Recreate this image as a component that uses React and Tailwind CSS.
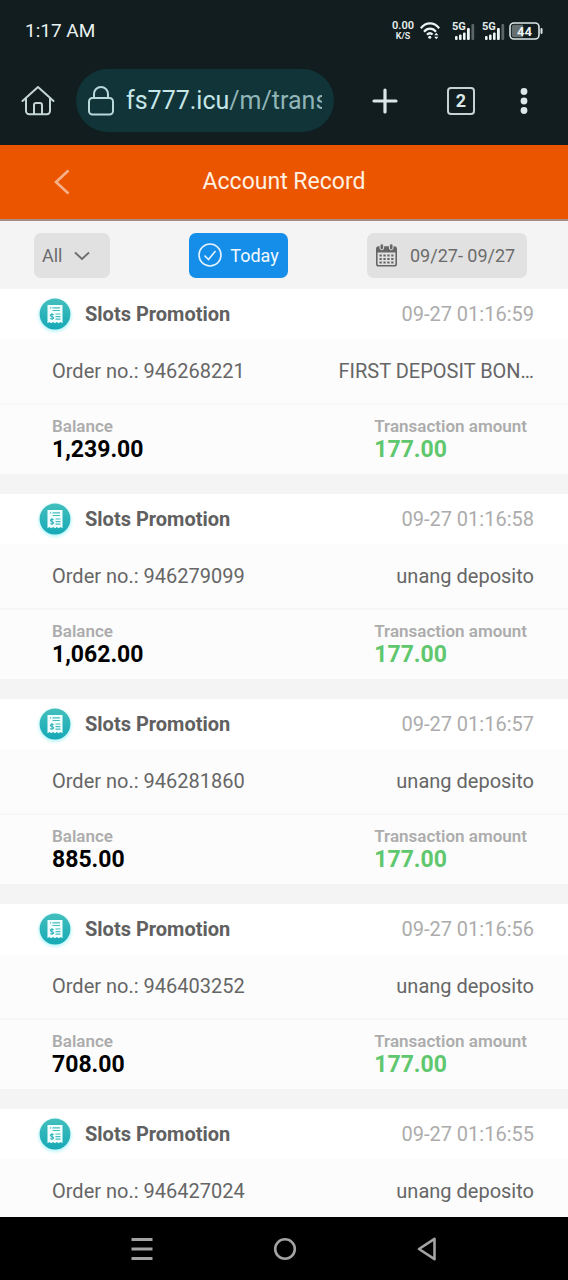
import React from "react";

const records = [
  { time: "09-27 01:16:59", order: "946268221", note: "FIRST DEPOSIT BON…", balance: "1,239.00", amount: "177.00" },
  { time: "09-27 01:16:58", order: "946279099", note: "unang deposito", balance: "1,062.00", amount: "177.00" },
  { time: "09-27 01:16:57", order: "946281860", note: "unang deposito", balance: "885.00", amount: "177.00" },
  { time: "09-27 01:16:56", order: "946403252", note: "unang deposito", balance: "708.00", amount: "177.00" },
  { time: "09-27 01:16:55", order: "946427024", note: "unang deposito" },
];

function Signal() {
  return (
    <svg width="24" height="20" viewBox="0 0 24 20" className="shrink-0" role="img" aria-label="5G signal">
      <text x="0" y="9" fontSize="11" fontWeight="700" fill="#e4ecec" fontFamily="Roboto, sans-serif">5G</text>
      <g fill="#eef5f5">
        <rect x="3" y="15" width="2.6" height="4" rx="1" />
        <rect x="7" y="13.5" width="2.6" height="5.5" rx="1" />
        <rect x="11" y="11.5" width="2.6" height="7.5" rx="1" />
        <rect x="15" y="7" width="2.8" height="12" rx="1" />
        <rect x="19.4" y="3" width="2.8" height="16" rx="1" fill="#5b6565" />
      </g>
    </svg>
  );
}

function StatusBar() {
  return (
    <div className="flex h-[62px] shrink-0 items-center justify-between pl-[25px] pr-[25px] text-[#e9f1f1]">
      <span className="text-[19px]">1:17 AM</span>
      <div className="flex items-center">
        <div className="mr-[6px] text-center text-[11px] font-semibold leading-[10px]">
          <div>0.00</div>
          <div className="text-[9px]">K/S</div>
        </div>
        <svg width="20" height="18" viewBox="0 0 20 18" className="mr-[12px]" fill="none" stroke="#eef5f5" strokeWidth="2.2" role="img" aria-label="Wi-Fi">
          <path d="M.8 6.2C6-.2 14-.2 19.2 6.2" />
          <path d="M4 9.7c3.4-4 8.600-4 12 0" />
          <path d="M7 12.800c1.700-1.800 4-1.800 5.600-.3" />
          <circle cx="9.800" cy="15.300" r="1.500" fill="#eef5f5" stroke="none" />
          <path d="M14.200 13.200 16.300 10.800l2.100 2.400zM14.200 14.800l2.100 2.400 2.100-2.400z" fill="#eef5f5" stroke="none" />
        </svg>
        <div className="mr-[3px] flex gap-[6px]">
          <Signal />
          <Signal />
        </div>
        <svg width="34" height="18" viewBox="0 0 34 18" role="img" aria-label="Battery 44 percent">
          <rect x="1" y="1" width="29" height="16" rx="4" fill="none" stroke="#dfe8e8" strokeWidth="1.600" />
          <path d="M5 2.800h9v12.400H5a2.200 2.200 0 0 1-2.200-2.200V5A2.200 2.200 0 0 1 5 2.800z" fill="#687171" />
          <rect x="31.500" y="6" width="2" height="6" rx="1" fill="#dfe8e8" />
          <text x="15.500" y="13.500" fontSize="13" fontWeight="700" textAnchor="middle" fill="#eef5f5" fontFamily="Roboto, sans-serif">44</text>
        </svg>
      </div>
    </div>
  );
}

function BrowserBar() {
  return (
    <div className="flex h-[83px] shrink-0 items-start pl-[21px] pr-[40px] pt-[7px]">
      <button type="button" aria-label="Home" className="flex h-[63px] items-center">
        <svg width="34" height="32" viewBox="0 0 34 32" fill="none" stroke="#c5d5d5" strokeWidth="2" strokeLinejoin="round" strokeLinecap="round">
          <path d="M1.500 16 17 2l15.500 14" />
          <path d="M5 13.500V26a3.200 3.200 0 0 0 3.200 3.200h17.600A3.200 3.200 0 0 0 29 26V13.500" />
          <path d="M13 29V20a2 2 0 0 1 2-2h4a2 2 0 0 1 2 2v9" />
        </svg>
      </button>
      <button type="button" aria-label="Address fs777.icu/m/trans" className="ml-[21px] flex h-[63px] min-w-0 flex-1 items-center rounded-full bg-[#103438] pl-[12px] pr-[12px]">
        <svg width="26" height="30" viewBox="0 0 26 30" className="shrink-0" fill="none" stroke="#b8d8da" strokeWidth="2">
          <rect x="1" y="12" width="24" height="16.500" rx="3.500" />
          <path d="M6 12V8a7 7 0 0 1 14 0v4" />
        </svg>
        <span className="ml-[12px] min-w-0 flex-1 overflow-hidden whitespace-nowrap text-left text-[25px] text-[#c6e6e8]">
          fs777.icu<span className="text-[#91b4b7]">/m/trans</span>
        </span>
      </button>
      <div className="ml-[38px] flex h-[63px] items-center">
        <button type="button" aria-label="New tab">
          <svg width="26" height="26" viewBox="0 0 26 26" stroke="#dce7e7" strokeWidth="3.200" strokeLinecap="round">
            <path d="M13 2v22M2 13h22" />
          </svg>
        </button>
        <button type="button" aria-label="Switch tabs" className="ml-[49px] flex h-7 w-7 items-center justify-center rounded border-2 border-[#c5d3d3] text-[18px] font-bold text-[#dce7e7]">
          2
        </button>
        <button type="button" aria-label="More options" className="ml-[45px]">
          <svg width="8" height="28" viewBox="0 0 8 28" fill="#dce7e7">
            <circle cx="4" cy="4.500" r="3.400" />
            <circle cx="4" cy="14" r="3.400" />
            <circle cx="4" cy="23.500" r="3.400" />
          </svg>
        </button>
      </div>
    </div>
  );
}

function Filters() {
  return (
    <div className="flex h-[68px] shrink-0 items-center justify-between bg-[#f4f4f4] pl-[34px] pr-[41px] text-[18px] text-[#6b6b6b]">
      <div className="relative">
        <select aria-label="Record type" className="h-[45px] w-[76px] appearance-none rounded-[7px] bg-[#e1e1e1] pl-2 text-[18px] text-[#6b6b6b]">
          <option>All</option>
        </select>
        <svg width="16" height="10" viewBox="0 0 16 10" className="pointer-events-none absolute right-5 top-[18px]" fill="none" stroke="#6b6b6b" strokeWidth="1.800">
          <path d="m1 1.500 7 6.500 7-6.500" />
        </svg>
      </div>
      <button type="button" className="flex h-[45px] w-[99px] items-center justify-center gap-2 rounded-[7px] bg-[#148ee9] text-[#f1f9ff]">
        <svg width="24" height="24" viewBox="0 0 24 24" fill="none" stroke="#e4f3ff" strokeWidth="1.600">
          <circle cx="12" cy="12" r="11" />
          <path d="m6.500 12.500 4 4 7-8.500" />
        </svg>
        Today
      </button>
      <button type="button" className="flex h-[45px] w-[160px] items-center rounded-[7px] bg-[#e1e1e1] pl-[9px]">
        <svg width="21" height="24" viewBox="0 0 21 24" className="mr-[13px] shrink-0">
          <rect x=".8" y="4" width="19.400" height="18.800" rx="1.800" fill="none" stroke="#666" strokeWidth="1.600" />
          <path d="M1 4h19v5.500H1z" fill="#666" />
          <rect x="4" y=".8" width="3.600" height="6" rx="1.800" fill="#666" stroke="#e1e1e1" />
          <rect x="13.400" y=".8" width="3.600" height="6" rx="1.800" fill="#666" stroke="#e1e1e1" />
          <path d="M3.500 12.500h14M3.500 16h14M3.500 19.500h14" stroke="#666" strokeWidth="2.200" strokeDasharray="2.300 1.600" />
        </svg>
        09/27- 09/27
      </button>
    </div>
  );
}

function ReceiptIcon() {
  return (
    <svg width="42" height="42" viewBox="0 0 42 42" className="shrink-0" aria-hidden="true">
      <defs>
        <linearGradient id="receipt-fill" x1="0" y1="0" x2="0" y2="1">
          <stop offset="0" stopColor="#43bfbd" />
          <stop offset="1" stopColor="#16a9b6" />
        </linearGradient>
        <radialGradient id="receipt-glow">
          <stop offset=".7" stopColor="#8eeef5" stopOpacity=".8" />
          <stop offset="1" stopColor="#c5f8fb" stopOpacity="0" />
        </radialGradient>
      </defs>
      <circle cx="21" cy="22.500" r="19" fill="url(#receipt-glow)" />
      <circle cx="21" cy="21" r="15.400" fill="url(#receipt-fill)" />
      <path d="M13.500 12h15v18.200l-1.900-1.300-1.900 1.300-1.800-1.300-1.900 1.300-1.900-1.300-1.900 1.300-1.800-1.300-1.900 1.300z" fill="#f2ffff" />
      <path d="M16 14.800h1.200M18.500 14.800h7.500M18.500 17.500h7.500M21.500 21h5M21.500 23.600h5M21.500 26.200h5" stroke="#48bcbf" strokeWidth="1.200" />
      <path d="M19.600 21.800c-.7-.9-3.200-.7-3.200.7 0 1.500 3.200.7 3.200 2.300 0 1.500-2.700 1.500-3.400.4M18 20v7" fill="none" stroke="#35b4bb" strokeWidth="1.100" />
    </svg>
  );
}

function RecordCard({ record }) {
  return (
    <li className="mb-5 bg-[#fcfcfc]">
      <div className="flex h-[50px] items-center bg-white pl-[34px] pr-[34px]">
        <ReceiptIcon />
        <h2 className="ml-[9px] flex-1 text-[20px] font-bold text-[#606060]">Slots Promotion</h2>
        <time className="text-[20px] text-[#acacac]">{record.time}</time>
      </div>
      <div className="flex h-[66px] items-center justify-between border-b-2 border-[#f7f7f7] pl-[52px] pr-[34px] text-[20px] text-[#666]">
        <p>Order no.: {record.order}</p>
        <p>{record.note}</p>
      </div>
      {record.balance && (
        <dl className="flex h-[69px] items-start justify-between pl-[52px] pr-[41px] pt-[10px]">
          <div>
            <dt className="text-[17px] font-semibold leading-[22px] text-[#acacac]">Balance</dt>
            <dd className="text-[23px] font-bold leading-[26px] text-black">{record.balance}</dd>
          </div>
          <div>
            <dt className="text-[17px] font-semibold leading-[22px] text-[#acacac]">Transaction amount</dt>
            <dd className="text-[23px] font-bold leading-[26px] text-[#5fc76d]">{record.amount}</dd>
          </div>
        </dl>
      )}
    </li>
  );
}

function SystemNav() {
  return (
    <nav aria-label="System" className="flex h-[63px] shrink-0 items-center justify-around bg-black px-[71px]">
      <button type="button" aria-label="Recent apps">
        <svg width="22" height="24" viewBox="0 0 22 24" stroke="#a3a3a3" strokeWidth="2.800">
          <path d="M.5 2.500h21M.5 12h21M.5 21.500h21" />
        </svg>
      </button>
      <button type="button" aria-label="Home screen">
        <svg width="24" height="24" viewBox="0 0 24 24" fill="none" stroke="#a3a3a3" strokeWidth="2.600">
          <circle cx="12" cy="12" r="9.800" />
        </svg>
      </button>
      <button type="button" aria-label="Back">
        <svg width="20" height="24" viewBox="0 0 20 24" fill="none" stroke="#a3a3a3" strokeWidth="2.600" strokeLinejoin="round">
          <path d="M17.500 1.800v20.400L2 12z" />
        </svg>
      </button>
    </nav>
  );
}

export default function App() {
  return (
    <div className="flex h-screen flex-col bg-[#f4f4f4] font-[Roboto,sans-serif]">
      <div className="shrink-0 bg-[#111d1e]">
        <StatusBar />
        <BrowserBar />
      </div>
      <header className="grid h-[76px] shrink-0 grid-cols-[1fr_auto_1fr] items-center border-b-2 border-[#a38d84] bg-[#eb5500]">
        <button type="button" aria-label="Back" className="ml-[53px] justify-self-start">
          <svg width="18" height="26" viewBox="0 0 18 26" fill="none" stroke="#f7b189" strokeWidth="2.600">
            <path d="M15.500 1.500 3 13l12.500 11.500" />
          </svg>
        </button>
        <h1 className="text-[23px] text-[#fff1e2]">Account Record</h1>
      </header>
      <Filters />
      <ul className="min-h-0 flex-1 overflow-y-auto [scrollbar-width:none]">
        {records.map((record) => (
          <RecordCard key={record.order} record={record} />
        ))}
      </ul>
      <SystemNav />
    </div>
  );
}
